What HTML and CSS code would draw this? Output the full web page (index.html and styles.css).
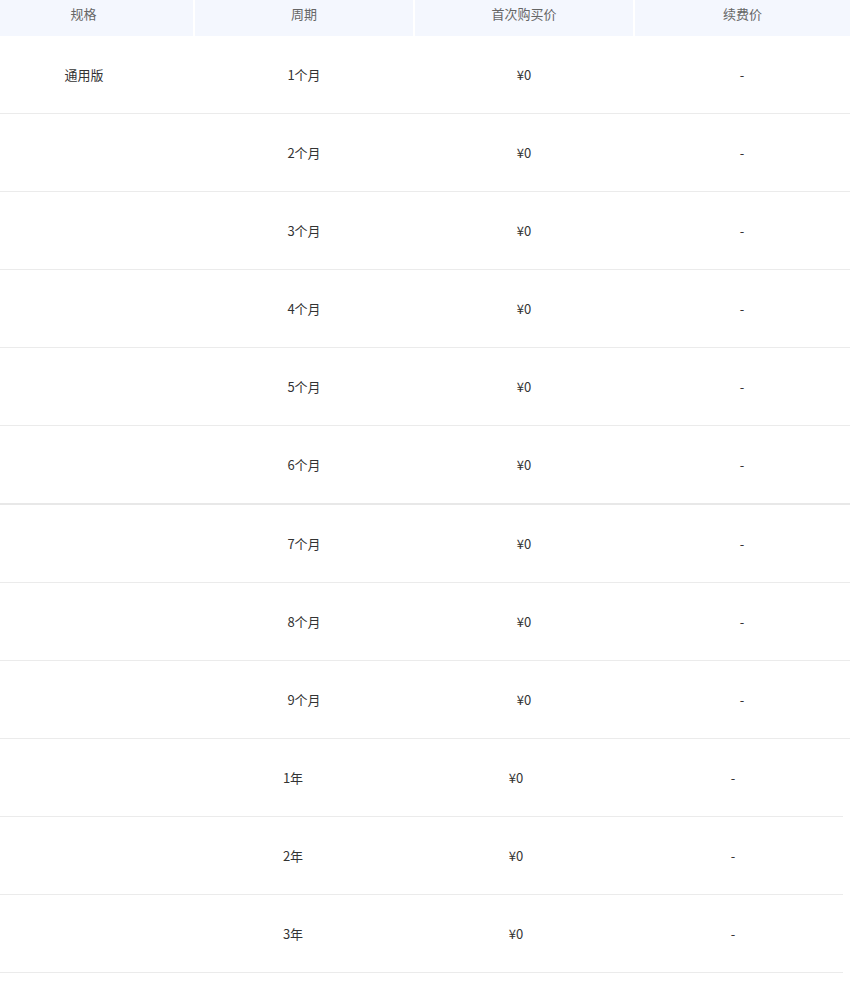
FILE: index.html
```html
<!DOCTYPE html>
<html lang="zh-CN">
<head>
    <meta charset="UTF-8">
    <meta name="viewport" content="width=device-width, initial-scale=1.0">
    <title>价格</title>
    <link rel="stylesheet" href="styles.css">
</head>
<body>
    <table class="price-table">
        <thead>
            <tr>
                <th class="col-spec">规格</th>
                <th class="col-period">周期</th>
                <th class="col-first">首次购买价</th>
                <th class="col-renew">续费价</th>
            </tr>
        </thead>
        <tbody>
            <tr><td class="col-spec">通用版</td><td>1个月</td><td>¥0</td><td>-</td></tr>
            <tr><td class="col-spec"></td><td>2个月</td><td>¥0</td><td>-</td></tr>
            <tr><td class="col-spec"></td><td>3个月</td><td>¥0</td><td>-</td></tr>
            <tr><td class="col-spec"></td><td>4个月</td><td>¥0</td><td>-</td></tr>
            <tr><td class="col-spec"></td><td>5个月</td><td>¥0</td><td>-</td></tr>
            <tr class="split"><td class="col-spec"></td><td>6个月</td><td>¥0</td><td>-</td></tr>
            <tr><td class="col-spec"></td><td>7个月</td><td>¥0</td><td>-</td></tr>
            <tr><td class="col-spec"></td><td>8个月</td><td>¥0</td><td>-</td></tr>
            <tr><td class="col-spec"></td><td>9个月</td><td>¥0</td><td>-</td></tr>
        </tbody>
    </table>

    <table class="price-table year-table">
        <tbody>
            <tr><td class="y-spec"></td><td class="y-period">1年</td><td class="y-first">¥0</td><td class="y-renew">-</td></tr>
            <tr><td class="y-spec"></td><td class="y-period">2年</td><td class="y-first">¥0</td><td class="y-renew">-</td></tr>
            <tr><td class="y-spec"></td><td class="y-period">3年</td><td class="y-first">¥0</td><td class="y-renew">-</td></tr>
        </tbody>
    </table>
</body>
</html>
```

FILE: styles.css
```css
body {
    margin: 0;
    background: #fff;
    font-family: "Noto Sans CJK SC", "Noto Sans", sans-serif;
    font-size: 13px;
    color: #333;
}
.price-table {
    width: 850px;
    border-collapse: collapse;
    table-layout: fixed;
}
.price-table th {
    height: 36px;
    padding: 0 0 8px;
    box-sizing: border-box;
    background: #f4f7fe;
    color: #666;
    font-weight: normal;
    text-align: center;
    line-height: 28px;
    border-left: 2px solid #fff;
}
.price-table th:first-child {
    border-left: none;
}
.price-table td {
    height: 77px;
    padding: 0;
    text-align: center;
    border-bottom: 1px solid #ebebeb;
}
.price-table tr.split td {
    border-bottom: 2px solid #e8e8e8;
}
.col-spec {
    width: 194px;
    padding-right: 26px !important;
    box-sizing: border-box;
}
.col-period {
    width: 220px;
}
.col-first {
    width: 220px;
}
.year-table {
    width: 843px;
}
.y-spec {
    width: 177px;
}
.y-period {
    width: 232px;
}
.y-first {
    width: 214px;
}
```
